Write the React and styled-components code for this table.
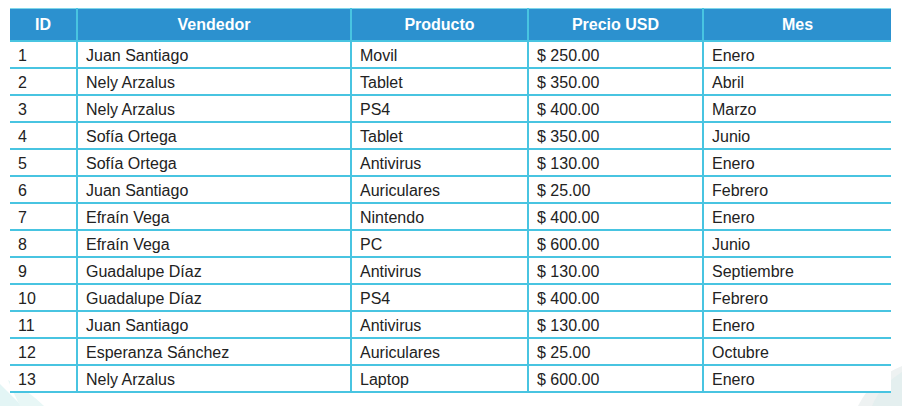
import styled, { createGlobalStyle } from "styled-components";

const GlobalStyle = createGlobalStyle`
  body {
    margin: 0;
    background: #ffffff;
    font-family: "Liberation Sans", Arial, sans-serif;
  }
`;

const rows = [
  [1, "Juan Santiago", "Movil", "$ 250.00", "Enero"],
  [2, "Nely Arzalus", "Tablet", "$ 350.00", "Abril"],
  [3, "Nely Arzalus", "PS4", "$ 400.00", "Marzo"],
  [4, "Sofía Ortega", "Tablet", "$ 350.00", "Junio"],
  [5, "Sofía Ortega", "Antivirus", "$ 130.00", "Enero"],
  [6, "Juan Santiago", "Auriculares", "$ 25.00", "Febrero"],
  [7, "Efraín Vega", "Nintendo", "$ 400.00", "Enero"],
  [8, "Efraín Vega", "PC", "$ 600.00", "Junio"],
  [9, "Guadalupe Díaz", "Antivirus", "$ 130.00", "Septiembre"],
  [10, "Guadalupe Díaz", "PS4", "$ 400.00", "Febrero"],
  [11, "Juan Santiago", "Antivirus", "$ 130.00", "Enero"],
  [12, "Esperanza Sánchez", "Auriculares", "$ 25.00", "Octubre"],
  [13, "Nely Arzalus", "Laptop", "$ 600.00", "Enero"],
];

const columns = [
  { title: "ID", width: 67 },
  { title: "Vendedor", width: 274 },
  { title: "Producto", width: 177 },
  { title: "Precio USD", width: 175 },
  { title: "Mes", width: 188 },
];

const App = () => {
  return (
    <>
      <GlobalStyle />
      <Page>
        <Decor />
        <Sheet>
          <colgroup>
            {columns.map((c) => (
              <col key={c.title} style={{ width: c.width }} />
            ))}
          </colgroup>
          <thead>
            <tr>
              {columns.map((c) => (
                <HeadCell key={c.title}>{c.title}</HeadCell>
              ))}
            </tr>
          </thead>
          <tbody>
            {rows.map((r) => (
              <tr key={r[0]}>
                {r.map((v, i) => (
                  <Cell key={i}>{v}</Cell>
                ))}
              </tr>
            ))}
          </tbody>
        </Sheet>
      </Page>
    </>
  );
};

const Decor = () => (
  <DecorLayer width="902" height="406" viewBox="0 0 902 406">
    <path d="M0 384 L22 406 L0 406 Z" fill="#e3f5f5" />
    <path d="M8 380 Q30 392 44 406 L20 406 Q14 394 8 380 Z" fill="#e8f7f6" />
    <path d="M902 366 Q872 378 858 406 L902 406 Z" fill="#eef2f2" />
    <path d="M902 372 Q880 386 872 406 L902 406 Z" fill="#e4efef" />
  </DecorLayer>
);

export default App;

const Page = styled.div`
  position: relative;
  width: 902px;
  height: 406px;
  padding: 8px 11px 0 10px;
  box-sizing: border-box;
  overflow: hidden;
`;

const DecorLayer = styled.svg`
  position: absolute;
  left: 0;
  top: 0;
  z-index: 0;
`;

const Sheet = styled.table`
  position: relative;
  z-index: 1;
  width: 881px;
  border-collapse: collapse;
  table-layout: fixed;
  background: #ffffff;
  border-top: 1px solid #7fd6ea;
`;

const HeadCell = styled.th`
  height: 31px;
  padding: 0;
  background: #2c91cf;
  color: #ffffff;
  font-size: 16px;
  font-weight: bold;
  text-align: center;
  border-bottom: 2px solid #48c4e1;
  border-left: 2px solid #48c4e1;
  &:first-child {
    border-left: none;
  }
`;

const Cell = styled.td`
  height: 27px;
  padding: 2px 0 0 8px;
  box-sizing: border-box;
  color: #222222;
  font-size: 16px;
  text-align: left;
  white-space: nowrap;
  border-bottom: 2px solid #48c4e1;
  border-left: 2px solid #48c4e1;
  &:first-child {
    border-left: none;
  }
`;
